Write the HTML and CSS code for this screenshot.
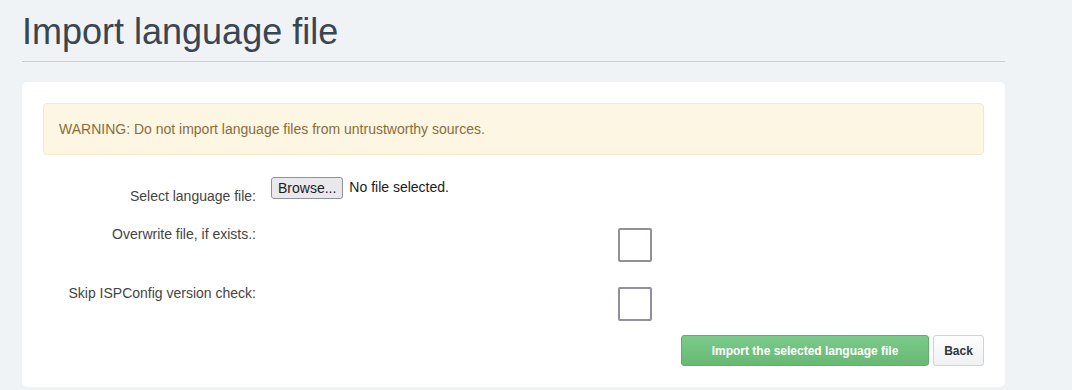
FILE: index.html
```html
<!DOCTYPE html>
<html lang="en">
<head>
<meta charset="utf-8">
<title>Import language file</title>
<link rel="stylesheet" href="styles.css">
</head>
<body>
<div class="page">
  <h1 class="page-title">Import language file</h1>
  <div class="card">
    <div class="alert">WARNING: Do not import language files from untrustworthy sources.</div>
    <div class="row row-file">
      <label class="label">Select language file:</label>
      <div class="field">
        <span class="file-btn">Browse...</span><span class="file-name">No file selected.</span>
      </div>
    </div>
    <div class="row row-check">
      <label class="label">Overwrite file, if exists.:</label>
      <div class="field field-check"><span class="checkbox"></span></div>
    </div>
    <div class="row row-check">
      <label class="label">Skip ISPConfig version check:</label>
      <div class="field field-check"><span class="checkbox"></span></div>
    </div>
    <div class="actions">
      <button class="btn btn-primary">Import the selected language file</button>
      <button class="btn btn-default">Back</button>
    </div>
  </div>
</div>
</body>
</html>
```
FILE: styles.css
```css
html, body {
  margin: 0;
  padding: 0;
}
body {
  background: #eff3f6;
  font-family: "Liberation Sans", Arial, sans-serif;
  font-size: 14px;
  line-height: 20px;
  color: #444;
  width: 1072px;
  height: 390px;
  overflow: hidden;
}
.page {
  margin-left: 22px;
  width: 983px;
}
.page-title {
  margin: 0;
  padding-top: 12px;
  padding-bottom: 9px;
  font-size: 36px;
  line-height: 40px;
  font-weight: 400;
  color: #3a4550;
  border-bottom: 1px solid #c9cdd1;
}
.card {
  margin-top: 20px;
  background: #fff;
  border-radius: 5px;
  padding: 21px;
  height: 305px;
  box-sizing: border-box;
}
.alert {
  background: #fcf6e3;
  border: 1px solid #f8e9c6;
  border-radius: 4px;
  color: #8a6d3b;
  padding: 15px;
  margin-bottom: 22px;
}
.row {
  display: flex;
  align-items: flex-start;
}
.label {
  width: 213px;
  text-align: right;
  flex: none;
}
.field {
  margin-left: 15px;
  width: 728px;
  flex: none;
}
.row-file {
  margin-bottom: 11px;
}
.row-file .label {
  padding-top: 9px;
}
.row-file .field {
  display: flex;
  align-items: flex-start;
}
.file-btn {
  display: inline-block;
  height: 20px;
  padding: 0 6px;
  border: 1px solid #8f8f9d;
  border-radius: 3px;
  background: #e9e9ed;
  color: #1b1b1b;
  font-size: 14px;
  line-height: 20px;
}
.file-name {
  margin-left: 6px;
  font-size: 14px;
  line-height: 20px;
  color: #1b1b1b;
}
.row-check {
  margin-bottom: 14px;
}
.row-check .label {
  padding-top: 7px;
}
.field-check {
  display: flex;
  justify-content: center;
  padding-top: 11px;
}
.checkbox {
  display: block;
  width: 30px;
  height: 30px;
  border: 2px solid #8f8f9d;
  border-radius: 2px;
  background: #fff;
}
.actions {
  display: flex;
  justify-content: flex-end;
  gap: 4px;
  margin-top: 1px;
}
.btn {
  font-family: "Liberation Sans", Arial, sans-serif;
  font-size: 12px;
  font-weight: 700;
  height: 31px;
  border-radius: 3px;
  padding: 0;
  margin: 0;
}
.btn-primary {
  width: 248px;
  color: #fff;
  border: 1px solid #5fae6c;
  background: linear-gradient(#7bcb8b, #67b973);
}
.btn-default {
  width: 51px;
  color: #333;
  border: 1px solid #cfd2d6;
  background: linear-gradient(#ffffff, #eef0f2);
}
```
